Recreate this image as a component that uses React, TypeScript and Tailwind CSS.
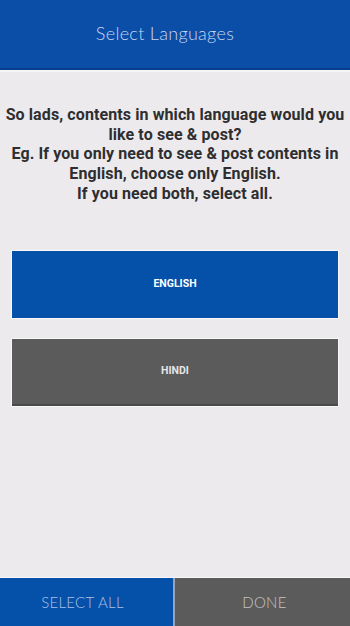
import React from "react";

const intro = [
  "So lads, contents in which language would you",
  "like to see & post?",
  "Eg. If you only need to see & post contents in",
  "English, choose only English.",
  "If you need both, select all.",
];

export default function App() {
  return (
    <div className="flex h-[626px] w-[350px] flex-col bg-[#eceaed] font-['Roboto',sans-serif]">
      <header className="flex h-[70px] shrink-0 items-center justify-center border-b-2 border-[#083f8c] bg-[#0a4ea8] pb-[2px] pr-[20px] shadow-[0_2px_0_#f6f6f8]">
        <h1 className="font-['Lato',sans-serif] text-[18px] font-light tracking-[0.3px] text-[#c9d6ef]">
          Select Languages
        </h1>
      </header>

      <main className="flex flex-1 flex-col px-3">
        <div className="mt-[35px] -mx-[12px] flex flex-col items-center text-[16px] font-bold leading-[19.7px] tracking-[0.1px] text-[#2e2e30]">
          {intro.map((line) => (
            <p key={line} className="whitespace-nowrap">
              {line}
            </p>
          ))}
        </div>

        <div className="mt-[47px] flex flex-col gap-[21px]">
          <button className="flex h-[67px] w-full items-center justify-center bg-[#0550a8] text-[10.5px] font-bold text-white outline outline-1 outline-[#f8f8fa]">
            ENGLISH
          </button>
          <button className="flex h-[67px] w-full items-center justify-center border-b-2 border-[#4a4a4a] bg-[#5b5b5b] text-[10.5px] font-bold text-[#e6e6e6] outline outline-1 outline-[#f8f8fa]">
            HINDI
          </button>
        </div>
      </main>

      <footer className="flex h-[49px] shrink-0 border-t border-[#f8f8fa] font-['Lato',sans-serif] text-[15px] font-light tracking-[0.3px]">
        <button className="flex w-[173px] items-center justify-center bg-[#0550a8] pr-[8px] text-[#a9c1ea]">
          SELECT ALL
        </button>
        <div className="w-[2px] bg-[#9aa3b3]" />
        <button className="flex flex-1 items-center justify-center bg-[#5b5b5b] pl-[4px] text-[#c4c4c4]">
          DONE
        </button>
      </footer>
    </div>
  );
}
